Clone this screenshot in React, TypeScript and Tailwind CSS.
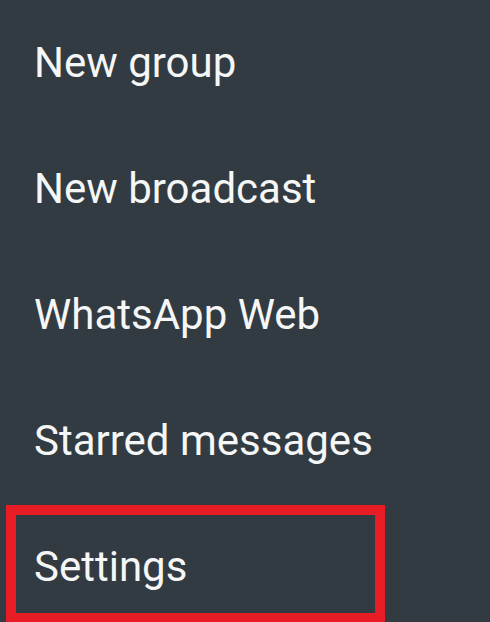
import React from "react";

const items = ["New group", "New broadcast", "WhatsApp Web", "Starred messages", "Settings"];

export default function App() {
  return (
    <div
      className="w-[490px] h-[622px] overflow-hidden bg-[#323b42] text-[#f5f6f6]"
      style={{ fontFamily: "Roboto, 'Noto Sans', sans-serif" }}
    >
      {items.map((t, i) => (
        <div key={t} className="relative h-[126px] flex items-center pl-[34px]">
          <span className="text-[42px] leading-none tracking-[0px]">{t}</span>
          {i === 4 && (
            <div className="absolute left-[6px] top-[1px] w-[379px] h-[118px] border-[10px] border-[#e81c24]" />
          )}
        </div>
      ))}
    </div>
  );
}
